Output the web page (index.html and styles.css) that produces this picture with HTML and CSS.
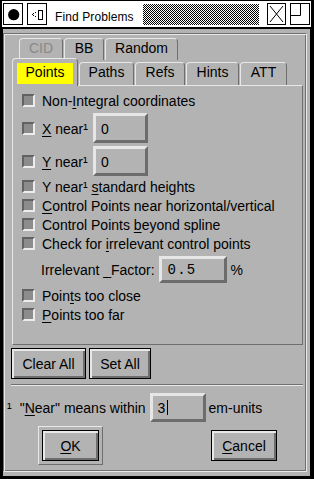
FILE: index.html
```html
<!DOCTYPE html>
<html lang="en">
<head>
    <meta charset="UTF-8">
    <meta name="viewport" content="width=device-width, initial-scale=1.0">
    <title>Find Problems</title>
    <link rel="stylesheet" href="styles.css">
</head>
<body>
    <div class="window">
        <div class="titlebar">
            <span class="tb-btn tb-close">
                <svg width="18" height="20" viewBox="0 0 18 20"><circle cx="9.7" cy="10.7" r="5.6" fill="#000"/></svg>
            </span>
            <span class="tb-btn tb-menu">
                <svg width="18" height="20" viewBox="0 0 18 20">
                    <rect x="4" y="10" width="1" height="1" fill="#000"/>
                    <rect x="5" y="9" width="1" height="1" fill="#000"/>
                    <rect x="5" y="11" width="1" height="1" fill="#000"/>
                    <rect x="7" y="8" width="1" height="1" fill="#000"/>
                    <rect x="7" y="12" width="1" height="1" fill="#000"/>
                    <rect x="10.5" y="6.5" width="4" height="9" fill="none" stroke="#000"/>
                </svg>
            </span>
            <span class="tb-title">Find Problems</span>
            <span class="tb-stipple"></span>
            <span class="tb-btn tb-x">
                <svg width="17" height="20" viewBox="0 0 17 20"><path d="M2 2 L15 18 M15 2 L2 18" stroke="#000" fill="none"/></svg>
            </span>
            <span class="tb-btn tb-max">
                <svg width="18" height="20" viewBox="0 0 18 20"><path d="M9.5 0 V11.5 H0" stroke="#000" fill="none"/></svg>
            </span>
        </div>

        <div class="dialog">
            <div class="frame">
                <div class="tabs">
                    <div class="tabrow back">
                        <div class="tab disabled w-cid">CID</div>
                        <div class="tab w-bb">BB</div>
                        <div class="tab w-random">Random</div>
                    </div>
                    <div class="tabrow front">
                        <div class="tab selected"><span class="hl">Points</span></div>
                        <div class="tab w-paths">Paths</div>
                        <div class="tab w-refs">Refs</div>
                        <div class="tab w-hints">Hints</div>
                        <div class="tab w-att">ATT</div>
                    </div>
                    <div class="pane">
                        <div class="row r-first"><span class="cb"></span><span class="txt">Non-<u>I</u>ntegral coordinates</span></div>
                        <div class="row r-field"><span class="cb"></span><span class="txt lbl"><u>X</u> near¹</span><span class="field f-small"><span class="val">0</span></span></div>
                        <div class="row r-field"><span class="cb"></span><span class="txt lbl"><u>Y</u> near¹</span><span class="field f-small"><span class="val">0</span></span></div>
                        <div class="row r-gap1"><span class="cb"></span><span class="txt">Y near¹ <u>s</u>tandard heights</span></div>
                        <div class="row"><span class="cb"></span><span class="txt"><u>C</u>ontrol Points near horizontal/vertical</span></div>
                        <div class="row"><span class="cb"></span><span class="txt">Control Points <u>b</u>eyond spline</span></div>
                        <div class="row"><span class="cb"></span><span class="txt">Check for <u>i</u>rrelevant control points</span></div>
                        <div class="row r-factor">
                            <span class="txt">Irrelevant _Factor:</span>
                            <span class="field f-factor"><span class="val mono">0.5</span></span>
                            <span class="txt">%</span>
                        </div>
                        <div class="row r-gap3"><span class="cb"></span><span class="txt">Poin<u>t</u>s too close</span></div>
                        <div class="row"><span class="cb"></span><span class="txt"><u>P</u>oints too far</span></div>
                    </div>
                </div>

                <div class="btnrow">
                    <button class="btn b-clear">Clear All</button>
                    <button class="btn b-set">Set All</button>
                </div>

                <div class="sep"></div>

                <div class="nearrow">
                    <span class="txt"><span class="sup">¹</span>"<u>N</u>ear" means within</span>
                    <span class="field f-near"><span class="val">3</span><span class="caret"></span></span>
                    <span class="txt">em-units</span>
                </div>

                <div class="okrow">
                    <div class="default">
                        <button class="btn b-ok"><u>O</u>K</button>
                    </div>
                    <button class="btn b-cancel"><u>C</u>ancel</button>
                </div>
            </div>
        </div>
    </div>
</body>
</html>
```

FILE: styles.css
```css
* {
    margin: 0;
    padding: 0;
    box-sizing: border-box;
}
body {
    background-color: #000;
    font: 14px/16px "Liberation Sans", Arial, sans-serif;
    color: #000;
}
u {
    text-decoration: underline;
    text-decoration-thickness: 1px;
    text-underline-offset: 2px;
}

/* window + title bar */
.window {
    width: 314px;
    height: 479px;
    background-color: #000;
    padding: 1px 3px 3px 2px;
    display: flex;
    flex-direction: column;
}
.titlebar {
    height: 26px;
    margin-bottom: 2px;
    background-color: #fff;
    padding: 2px 1px 0 1px;
    display: flex;
    align-items: flex-start;
}
.tb-btn {
    display: block;
    width: 20px;
    height: 22px;
    border: 1px solid #000;
}
.tb-btn svg {
    display: block;
}
.tb-menu {
    margin-left: 4px;
}
.tb-title {
    margin: 7px 0 0 8px;
    font-size: 12px;
    line-height: 14px;
    letter-spacing: 0.1px;
}
.tb-stipple {
    flex: 1;
    height: 21px;
    margin: 1px 0 0 9px;
    background: repeating-conic-gradient(#000 0 25%, #fff 0 50%) 0 0 / 2px 2px;
}
.tb-x {
    width: 19px;
    margin-left: 8px;
}
.tb-max {
    margin-left: 4px;
}

/* dialog body */
.dialog {
    flex: 1;
    margin: 0 1px 0 1px;
    background-color: #b3b3b3;
    padding: 4px 3px 4px 0;
    display: flex;
}
.frame {
    flex: 1;
    border: 1px solid;
    border-color: #707070 #e8e8e8 #e8e8e8 #707070;
    box-shadow: inset 1px 1px #e8e8e8, inset -1px -1px #707070;
}

/* tabs */
.tabs {
    margin: 4px 3px 0 8px;
}
.tabrow {
    display: flex;
    align-items: flex-end;
}
.tabrow.back {
    margin-left: 7px;
}
.tabrow.front {
    margin-top: -2px;
}
.tab {
    height: 22px;
    margin-right: 1px;
    border: 1px solid #e8e8e8;
    border-right-color: #6e6e6e;
    border-bottom: none;
    border-radius: 4px 4px 0 0;
    text-align: center;
    padding-top: 1px;
    background-color: #b3b3b3;
}
.tabrow.front .tab {
    height: 23px;
}
.tab.disabled {
    color: #888;
}
.w-cid { width: 44px; }
.w-bb { width: 40px; }
.w-random { width: 73px; }
.w-paths { width: 55px; }
.w-refs { width: 50px; }
.w-hints { width: 53px; }
.w-att { width: 47px; }
.tabrow.front .tab.selected {
    width: 66px;
    height: 28px;
    margin-bottom: -1px;
    padding: 4px 4px 0 4px;
    position: relative;
    z-index: 1;
}
.hl {
    display: block;
    height: 21px;
    padding-top: 1px;
    background-color: #ffff00;
}
.pane {
    height: 260px;
    border: 1px solid;
    border-color: #e8e8e8 #6e6e6e #6e6e6e #e8e8e8;
    padding: 5px 0 0 9px;
}

/* rows */
.row {
    height: 19px;
    display: flex;
    align-items: center;
}
.r-field {
    height: 30px;
    margin-top: 3px;
}
.r-gap1 {
    margin-top: 1px;
}
.r-factor {
    height: 27px;
    margin-top: 3px;
    padding-left: 19px;
}
.r-gap3 {
    margin-top: 3px;
}
.cb {
    width: 13px;
    height: 13px;
    margin-right: 7px;
    background-color: #8c8c8c;
    border: 2px solid;
    border-color: #626262 #ececec #ececec #626262;
}
.txt {
    margin-top: 1px;
    white-space: nowrap;
}
.lbl {
    width: 51px;
}
.field {
    display: flex;
    align-items: center;
    border: 3px solid;
    border-color: #e6e6e6 #6c6c6c #6c6c6c #e6e6e6;
    padding-left: 5px;
    background-color: #b3b3b3;
}
.f-small {
    width: 55px;
    height: 30px;
}
.f-factor {
    width: 68px;
    height: 27px;
    margin: 0 4px;
    padding-left: 6px;
}
.f-near {
    width: 56px;
    height: 29px;
    margin: 0 3px 0 4px;
}
.val {
    margin-top: 1px;
}
.mono {
    font-family: "Liberation Mono", "DejaVu Sans Mono", monospace;
    letter-spacing: 1.2px;
}
.caret {
    display: block;
    width: 1px;
    height: 15px;
    margin-left: 2px;
    background-color: #000;
}

/* buttons */
.btnrow {
    display: flex;
    margin: 3px 0 0 7px;
}
.btn {
    height: 31px;
    border: 1px solid #000;
    background-color: #b3b3b3;
    box-shadow: inset 2px 2px #e8e8e8, inset -2px -2px #6e6e6e;
    font: 14px/16px "Liberation Sans", Arial, sans-serif;
    color: #000;
    text-align: center;
}
.b-clear {
    width: 75px;
}
.b-set {
    width: 62px;
    margin-left: 3px;
}
.sep {
    height: 2px;
    margin: 5px 3px 0 7px;
    border-top: 1px solid #707070;
    border-bottom: 1px solid #e8e8e8;
}
.nearrow {
    display: flex;
    align-items: center;
    margin: 7px 0 0 3px;
}
.sup {
    margin-right: 8px;
}
.okrow {
    display: flex;
    align-items: flex-start;
    margin: 4px 0 0 34px;
}
.default {
    padding: 3px 3px 3px 3px;
    border: 1px solid;
    border-color: #e8e8e8 #6e6e6e #6e6e6e #e8e8e8;
}
.b-ok {
    display: block;
    width: 57px;
}
.b-cancel {
    width: 66px;
    margin: 4px 0 0 108px;
}
```
